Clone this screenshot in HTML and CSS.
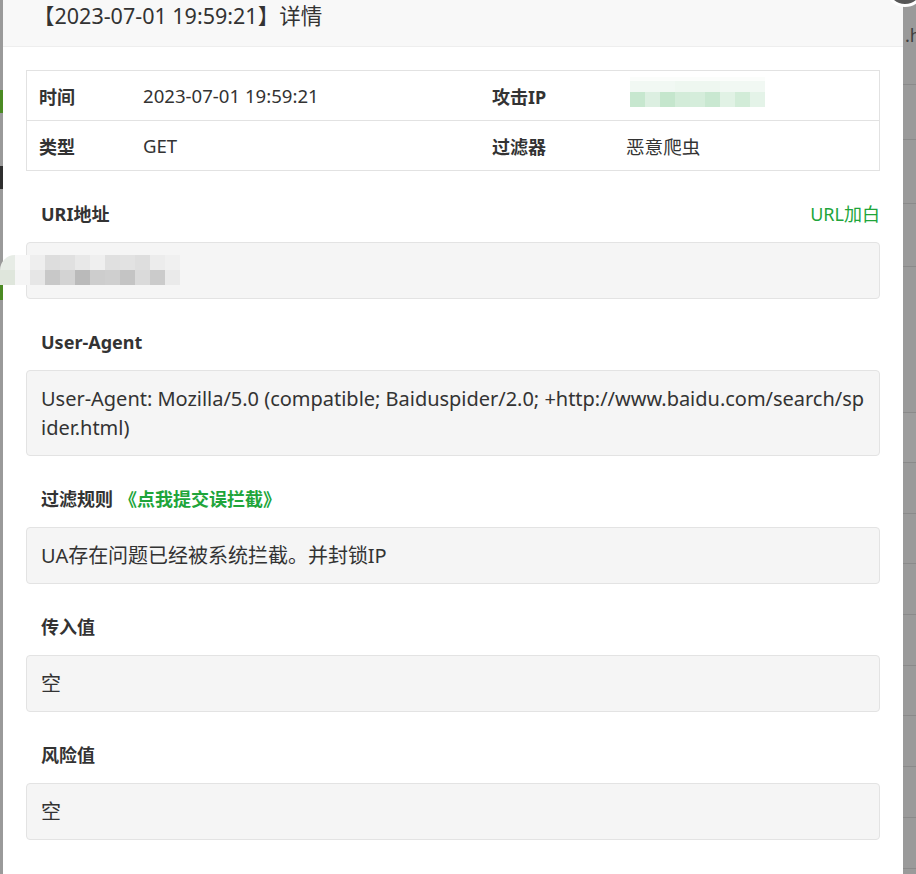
FILE: index.html
```html
<!DOCTYPE html>
<html lang="zh-CN">
<head>
<meta charset="utf-8">
<title>详情</title>
<link rel="stylesheet" href="styles.css">
</head>
<body>
<div class="page">
  <div class="strip-left"></div>
  <div class="modal">
    <span class="close"></span>
    <div class="title">【2023-07-01 19:59:21】详情</div>
    <div class="content">
      <div class="info">
        <div class="cell k">时间</div>
        <div class="cell v">2023-07-01 19:59:21</div>
        <div class="cell k">攻击IP</div>
        <div class="cell v">
          <svg class="ip-mosaic" width="135" height="30" viewBox="0 0 135 30">
            <rect x="0" y="0" width="135" height="4" fill="#fbfdfb"/>
            <rect x="0" y="4" width="135" height="11" fill="#f1f8f3"/>
            <rect x="45" y="4" width="45" height="11" fill="#eef7f0"/>
            <rect x="0" y="15" width="15" height="15" fill="#c7e7cf"/>
            <rect x="15" y="15" width="15" height="15" fill="#dcefe1"/>
            <rect x="30" y="15" width="15" height="15" fill="#c5e6cd"/>
            <rect x="45" y="15" width="15" height="15" fill="#d3ecd9"/>
            <rect x="60" y="15" width="15" height="15" fill="#d5eddb"/>
            <rect x="75" y="15" width="15" height="15" fill="#c9e8d1"/>
            <rect x="90" y="15" width="15" height="15" fill="#e1f2e5"/>
            <rect x="105" y="15" width="15" height="15" fill="#d2ecd8"/>
            <rect x="120" y="15" width="15" height="15" fill="#e4f3e8"/>
          </svg>
        </div>
        <div class="cell k last">类型</div>
        <div class="cell v last">GET</div>
        <div class="cell k last">过滤器</div>
        <div class="cell v last">恶意爬虫</div>
      </div>

      <div class="section-head">
        <span class="label">URI地址</span>
        <span class="link">URL加白</span>
      </div>
      <div class="box uri">
        <span class="uri-text">&nbsp;</span>
        <svg class="uri-mosaic" width="182" height="32" viewBox="0 0 182 32">
          <circle cx="15" cy="15" r="15" fill="#e7ece6"/>
          <rect x="0" y="15" width="15" height="15" fill="#dfe6dc"/>
          <rect x="15" y="0" width="15" height="15" fill="#f8f8f8"/>
          <rect x="15" y="15" width="15" height="15" fill="#f5f5f5"/>
          <rect x="30" y="0" width="15" height="15" fill="#eeeeee"/>
          <rect x="30" y="15" width="15" height="15" fill="#e6e6e6"/>
          <rect x="45" y="0" width="15" height="15" fill="#dddddd"/>
          <rect x="45" y="15" width="15" height="15" fill="#c8c8c8"/>
          <rect x="60" y="0" width="15" height="15" fill="#e0e0e0"/>
          <rect x="60" y="15" width="15" height="15" fill="#d3d3d3"/>
          <rect x="75" y="0" width="15" height="15" fill="#e8e8e8"/>
          <rect x="75" y="15" width="15" height="15" fill="#bababa"/>
          <rect x="90" y="0" width="15" height="15" fill="#efefef"/>
          <rect x="90" y="15" width="15" height="15" fill="#cdcdcd"/>
          <rect x="105" y="0" width="15" height="15" fill="#e0e0e0"/>
          <rect x="105" y="15" width="15" height="15" fill="#cfcfcf"/>
          <rect x="120" y="0" width="15" height="15" fill="#e2e2e2"/>
          <rect x="120" y="15" width="15" height="15" fill="#c4c4c4"/>
          <rect x="135" y="0" width="15" height="15" fill="#dedede"/>
          <rect x="135" y="15" width="15" height="15" fill="#dadada"/>
          <rect x="150" y="0" width="15" height="15" fill="#ececec"/>
          <rect x="150" y="15" width="15" height="15" fill="#cbcbcb"/>
          <rect x="165" y="0" width="15" height="15" fill="#f0f0f0"/>
          <rect x="165" y="15" width="15" height="15" fill="#eaeaea"/>
        </svg>
      </div>

      <div class="section-head">
        <span class="label">User-Agent</span>
      </div>
      <div class="box">User-Agent: Mozilla/5.0 (compatible; Baiduspider/2.0; +http://www.baidu.com/search/spider.html)</div>

      <div class="section-head">
        <span class="label">过滤规则<span class="report">《点我提交误拦截》</span></span>
      </div>
      <div class="box">UA存在问题已经被系统拦截。并封锁IP</div>

      <div class="section-head">
        <span class="label">传入值</span>
      </div>
      <div class="box">空</div>

      <div class="section-head">
        <span class="label">风险值</span>
      </div>
      <div class="box">空</div>
    </div>
  </div>
  <div class="strip-right">.h</div>
</div>
</body>
</html>
```

FILE: styles.css
```css
* {
  box-sizing: border-box;
}

html, body {
  margin: 0;
  padding: 0;
}

body {
  font-family: "Noto Sans", "Noto Sans CJK SC", sans-serif;
  color: #333;
  background: #999;
  overflow: hidden;
}

.page {
  display: flex;
  height: 874px;
  overflow: hidden;
}

.strip-left {
  width: 3px;
  flex: none;
  background: linear-gradient(to bottom,
    #9a9a9a 0 90px,
    #4b8a23 90px 113px,
    #9a9a9a 113px 166px,
    #2e2e2e 166px 189px,
    #9a9a9a 189px 279px,
    #4b8a23 279px 300px,
    #9a9a9a 300px);
}

.modal {
  width: 900px;
  flex: none;
  background: #fff;
  position: relative;
}

.close {
  position: absolute;
  top: -33px;
  right: -22px;
  width: 40px;
  height: 40px;
  border-radius: 50%;
  background: #575757;
  border: 3px solid #fff;
  z-index: 2;
}

.strip-right {
  flex: 1;
  padding: 20px 0 0 2px;
  font-size: 18px;
  line-height: 30px;
  color: #404040;
  white-space: nowrap;
  overflow: hidden;
  background: linear-gradient(to bottom,
    #9a9a9a 0 84px, #8a8a8a 84px 85px,
    #9a9a9a 85px 139px, #8a8a8a 139px 140px,
    #9a9a9a 140px 203px, #8a8a8a 203px 204px,
    #9a9a9a 204px 266px, #8a8a8a 266px 267px,
    #9a9a9a 267px 412px, #8a8a8a 412px 413px,
    #9d9d9d 413px 462px, #8a8a8a 462px 463px,
    #9a9a9a 463px 513px, #8a8a8a 513px 514px,
    #9a9a9a 514px 563px, #8a8a8a 563px 564px,
    #9a9a9a 564px 614px, #8a8a8a 614px 615px,
    #9a9a9a 615px 665px, #8a8a8a 665px 666px,
    #9a9a9a 666px 715px, #8a8a8a 715px 716px,
    #9a9a9a 716px 766px, #8a8a8a 766px 767px,
    #9a9a9a 767px 817px, #8a8a8a 817px 818px,
    #9a9a9a 818px 868px, #8a8a8a 868px 869px,
    #9a9a9a 869px);
}

.title {
  height: 47px;
  background: #f8f8f8;
  border-bottom: 1px solid #eee;
  padding-left: 30px;
  font-size: 21.5px;
  line-height: 32px;
  color: #333;
  white-space: nowrap;
}

.content {
  padding: 23px 23px 0;
}

.info {
  display: grid;
  grid-template-columns: 104px 349px 134px 1fr;
  border: 1px solid #e2e2e2;
}

.cell {
  height: 50px;
  display: flex;
  align-items: center;
  padding: 0 12px;
  font-size: 18px;
  border-bottom: 1px solid #e2e2e2;
  white-space: nowrap;
}

.cell.last {
  height: 49px;
  border-bottom: none;
}

.k {
  font-weight: 700;
}

.v {
  font-weight: 400;
  font-size: 18.6px;
}

.ip-mosaic {
  display: block;
  margin: -8px 0 0 4px;
}

.section-head {
  display: flex;
  justify-content: space-between;
  align-items: center;
  margin: 28px 0 13px;
  height: 30px;
  font-size: 18px;
  line-height: 30px;
}

.label {
  font-weight: 700;
  padding-left: 15px;
}

.link {
  color: #20a53a;
}

.report {
  color: #20a53a;
  margin-left: 6px;
}

.box {
  background: #f5f5f5;
  border: 1px solid #e3e3e3;
  border-radius: 4px;
  padding: 13px 11px 13px 14px;
  font-size: 20px;
  line-height: 29px;
  letter-spacing: -0.02px;
  word-break: break-all;
}

.uri {
  position: relative;
}

.uri-mosaic {
  position: absolute;
  left: -27px;
  top: 12px;
}
```
